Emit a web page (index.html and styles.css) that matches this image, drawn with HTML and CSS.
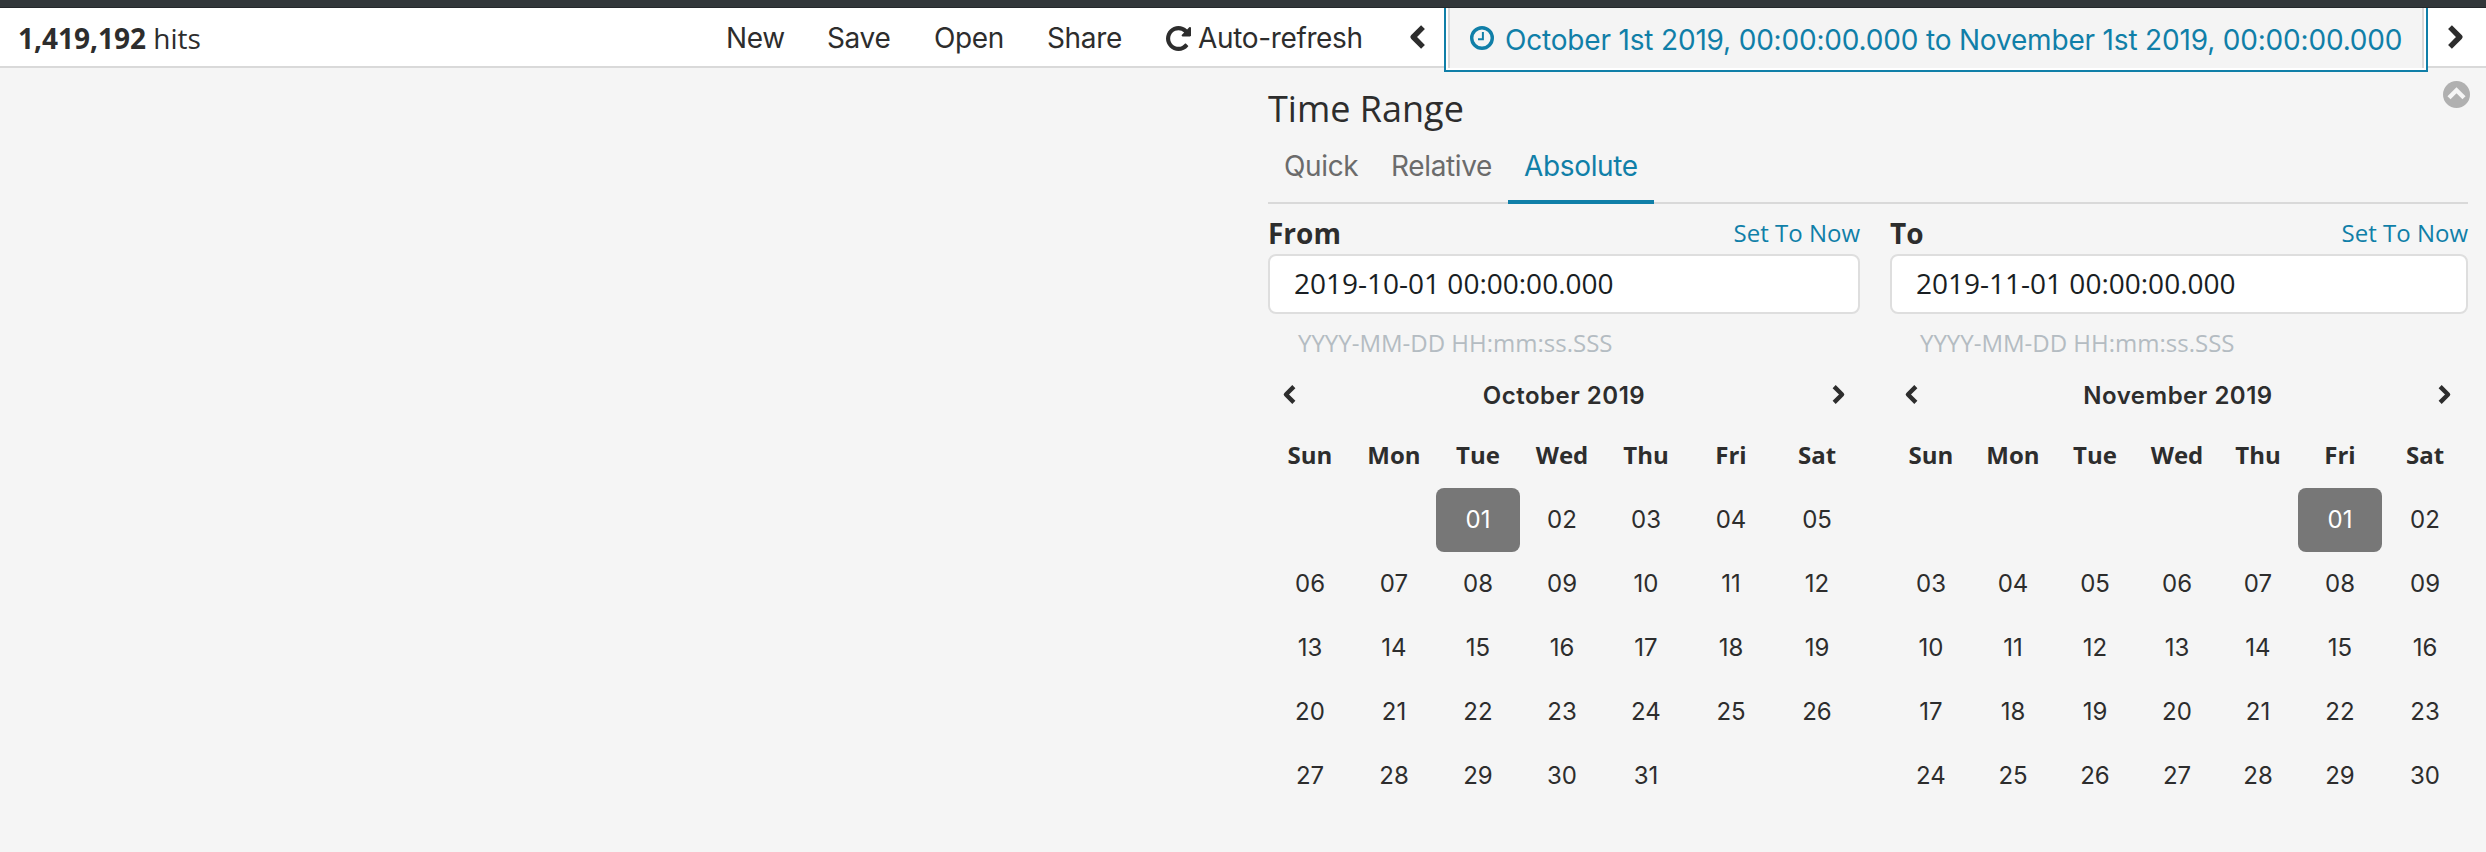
FILE: index.html
```
<!DOCTYPE html>
<html lang="en">
<head>
<meta charset="utf-8">
<title>Discover</title>
<link rel="stylesheet" href="styles.css">
</head>
<body>
<svg class="sprite" width="0" height="0">
  <symbol id="left" viewBox="0 0 16 26"><path d="M14 3.200 4.200 13l9.800 9.800" fill="none" stroke="currentColor" stroke-width="5.4" stroke-linejoin="round"/></symbol>
  <symbol id="right" viewBox="0 0 16 26"><path d="M2 3.200l9.800 9.800L2 22.800" fill="none" stroke="currentColor" stroke-width="5.4" stroke-linejoin="round"/></symbol>
</svg>
<div class="chrome"></div>
<header class="bar">
  <div class="hits"><b>1,419,192</b> <span>hits</span></div>
  <nav class="menu">
    <a class="m-new">New</a><a class="m-save">Save</a><a class="m-open">Open</a><a class="m-share">Share</a>
    <a class="m-auto"><svg class="refresh" viewBox="0 0 1536 1536"><path fill="currentColor" d="M1536 128v448q0 26-19 45t-45 19h-448q-42 0-59-40-17-39 14-69l138-138Q969 256 768 256q-104 0-198.500 40.500T406 406 296.500 569.500 256 768t40.500 198.500T406 1130t163.500 109.500T768 1280q119 0 225-52t179-147q7-10 23-12 14 0 25 9l137 138q9 8 9.500 20.500t-7.500 22.500q-109 132-264 204.500T768 1536q-156 0-298-61t-245-164-164-245T0 768t61-298 164-245T470 61 768 0q147 0 284.500 55.500T1297 212l130-129q29-31 70-14 39 17 39 59z"/></svg><span>Auto-refresh</span></a>
  </nav>
  <svg class="step prev"><use href="#left"/></svg>
  <div class="range"><div class="range-in">
    <svg class="clock" viewBox="0 0 24 24" fill="none" stroke="currentColor"><circle cx="12" cy="12" r="10.300" stroke-width="3.400"/><path d="M12.900 6v7.200H8" stroke-width="2"/></svg>
    <span>October 1st 2019, 00:00:00.000 to November 1st 2019, 00:00:00.000</span>
  </div></div>
  <svg class="step next"><use href="#right"/></svg>
</header>
<main class="panel">
  <div class="head">
    <h1>Time Range</h1>
    <svg class="collapse" viewBox="0 0 27 27"><circle cx="13.500" cy="13.500" r="13.500" fill="#b0b0b0"/><path d="M6 16.800l7.500-7.500 7.500 7.500" fill="none" stroke="#f5f5f5" stroke-width="4.400"/></svg>
  </div>
  <div class="tabs"><a class="t-quick">Quick</a><a class="t-rel">Relative</a><a class="t-abs">Absolute</a></div>
  <div class="cols">
    <section class="from">
      <div class="label"><b>From</b><a>Set To Now</a></div>
      <div class="input"><span>2019-10-01 00:00:00.000</span></div>
      <div class="hint"><span>YYYY-MM-DD HH:mm:ss.SSS</span></div>
      <div class="month"><svg><use href="#left"/></svg><b>October 2019</b><svg><use href="#right"/></svg></div>
      <div class="grid" data-start="2" data-days="31"></div>
    </section>
    <section class="to">
      <div class="label"><b>To</b><a>Set To Now</a></div>
      <div class="input"><span>2019-11-01 00:00:00.000</span></div>
      <div class="hint"><span>YYYY-MM-DD HH:mm:ss.SSS</span></div>
      <div class="month"><svg><use href="#left"/></svg><b>November 2019</b><svg><use href="#right"/></svg></div>
      <div class="grid" data-start="5" data-days="30"></div>
    </section>
  </div>
</main>
<script src="calendar.js"></script>
</body>
</html>
```
FILE: styles.css
```
* { box-sizing: border-box; }
body { margin: 0; height: 852px; overflow: hidden; background: #f5f5f5; color: #2d2d2d; font-family: "Open Sans", sans-serif; font-size: 28px; }
a, span, b, h1 { white-space: nowrap; }
.sprite { position: absolute; }
.chrome { height: 8px; background: #32373a; border-bottom: 1px solid #24282b; }
.bar { display: flex; height: 60px; background: #fff; border-bottom: 2px solid #d9d9d9; }
.hits { width: 726px; padding-left: 18px; line-height: 60px; }
.menu { display: flex; width: 683px; font-family: Inter, sans-serif; line-height: 60px; letter-spacing: -0.35px; }
.m-new { width: 101px; }
.m-save { width: 107px; }
.m-open { width: 113px; }
.m-share { width: 119px; }
.m-auto { display: flex; gap: 7px; }
.refresh { width: 25px; height: 25px; margin-top: 18px; }
.step { width: 16px; height: 26px; margin-top: 16px; }
.prev { margin-right: 19px; }
.next { margin-left: 20px; }
.range { width: 984px; height: 64px; border: 2px solid #107fa8; border-top: 0; background: #fff; padding: 0 2px 2px; }
.range-in { display: flex; height: 60px; background: #f4f4f4; border: solid #d9d9d9; border-width: 0 2px; color: #107fa8; font-family: Inter, sans-serif; line-height: 64px; padding-left: 20px; letter-spacing: -0.18px; }
.clock { width: 24px; height: 24px; margin: 18px 11px 0 0; }
.panel { padding: 0 18px 0 1268px; }
.head { display: flex; justify-content: space-between; height: 72px; }
h1 { margin: 16px 0 0; font-size: 36px; font-weight: 400; line-height: 49px; }
.collapse { width: 27px; height: 27px; margin: 13px -2px 0 0; }
.tabs { display: flex; height: 64px; border-bottom: 2px solid #d9d9d9; font-family: Inter, sans-serif; line-height: 52px; letter-spacing: -0.35px; color: #6b6b6b; }
.tabs a { height: 64px; padding-left: 16px; }
.t-quick { width: 107px; }
.t-rel { width: 133px; }
.t-abs { width: 146px; color: #107fa8; border-bottom: 4px solid #107fa8; }
.cols { display: flex; gap: 30px; }
.from { width: 592px; }
.to { width: 578px; }
.label { display: flex; justify-content: space-between; height: 50px; line-height: 58px; }
.label a { font-size: 24px; color: #107fa8; }
.input { height: 60px; border: 2px solid #dedede; border-radius: 8px; background: #fff; color: #191e23; padding-left: 24px; line-height: 54px; }
.hint { height: 62px; padding-left: 30px; font-size: 24px; line-height: 58px; color: #b4bcc2; }
.month { display: flex; justify-content: space-between; height: 48px; padding: 8px 14px 0; font-family: Inter, sans-serif; font-size: 24px; line-height: 24px; }
.month b { font-weight: 600; letter-spacing: 0.5px; }
.to .month { padding-right: 16px; }
.month svg { width: 14px; height: 21px; }
.grid { display: grid; grid-auto-rows: 64px; text-align: center; font-family: Inter, sans-serif; font-size: 24px; line-height: 64px; }
.from .grid { grid-template-columns: 84px 84px 84px 84px 84px 86px 86px; }
.to .grid { grid-template-columns: 82px 82px 82px 82px 80px 84px 86px; }
.grid .dow { font-family: "Open Sans", sans-serif; line-height: 62px; }
.picked { background: #777; color: #fff; border-radius: 8px; }
```
FILE: calendar.js
```
document.querySelectorAll('.grid').forEach(function (grid) {
  function cell(tag, text, name) {
    var el = document.createElement(tag);
    el.textContent = text;
    if (name) el.className = name;
    grid.appendChild(el);
  }
  ['Sun', 'Mon', 'Tue', 'Wed', 'Thu', 'Fri', 'Sat'].forEach(function (d) { cell('b', d, 'dow'); });
  for (var i = 0; i < +grid.dataset.start; i++) cell('span', '');
  for (var n = 1; n <= +grid.dataset.days; n++) cell('span', String(n).padStart(2, '0'), n === 1 ? 'picked' : '');
});
```
